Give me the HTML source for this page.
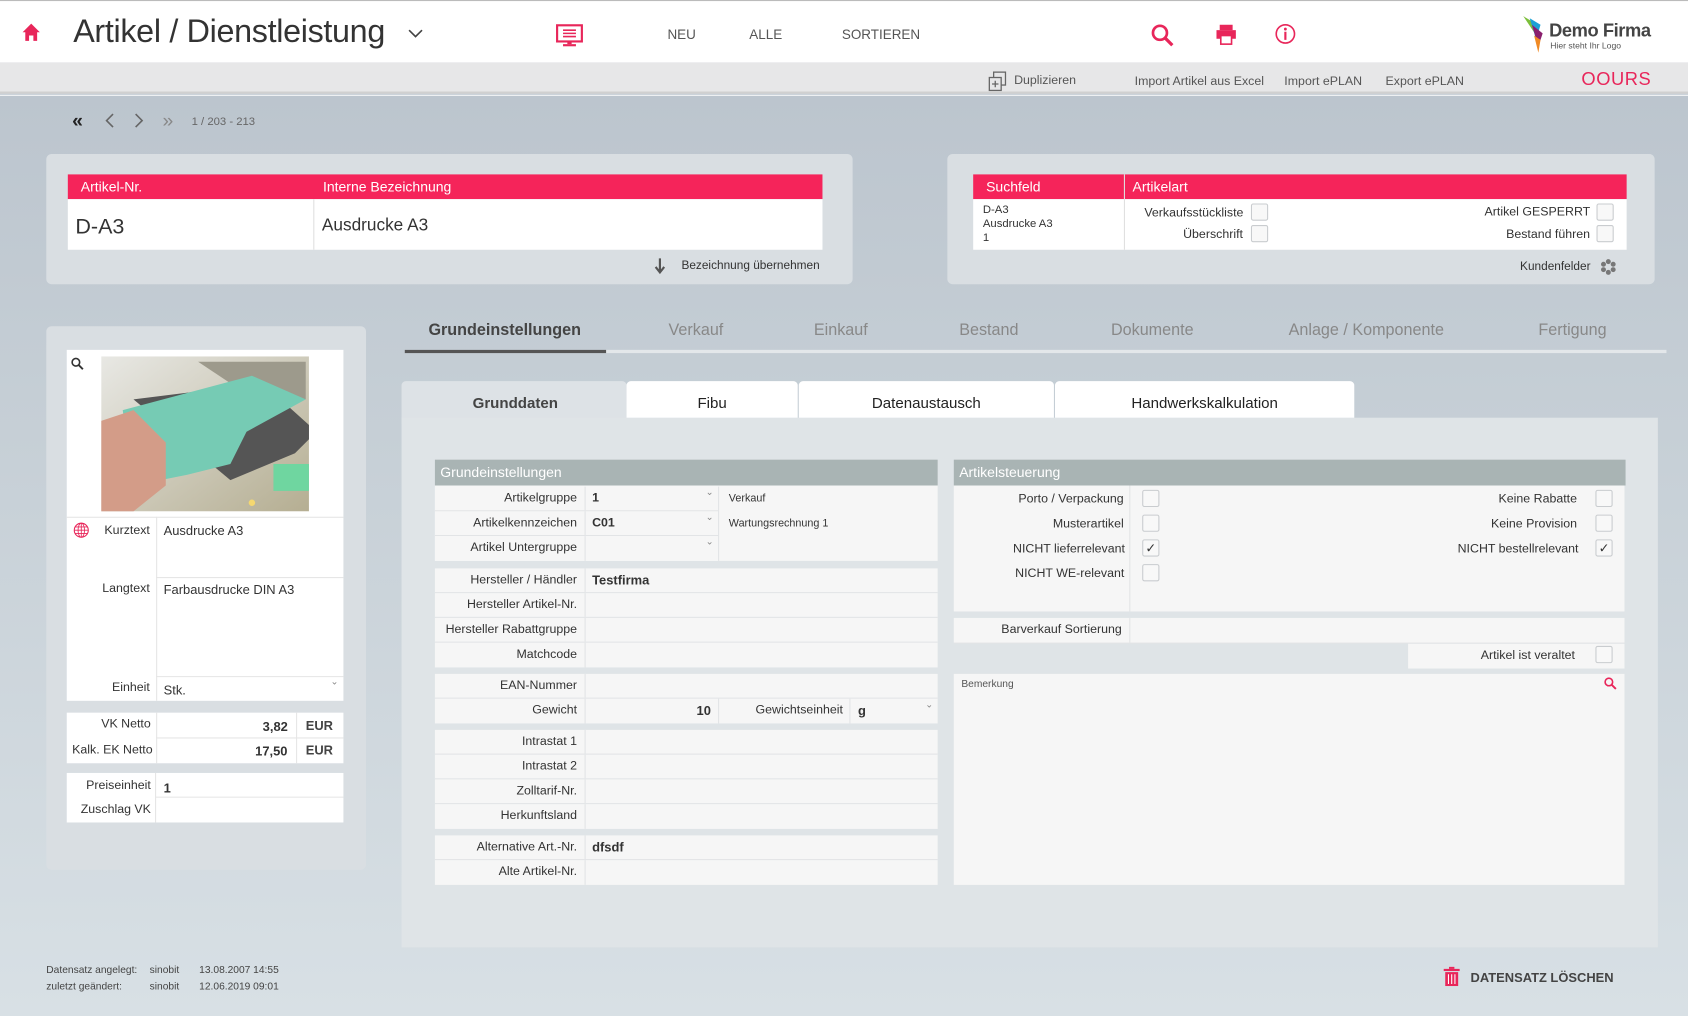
<!DOCTYPE html>
<html><head><meta charset="utf-8">
<style>
*{box-sizing:border-box;margin:0;padding:0}
html,body{width:1688px;height:1016px;overflow:hidden;background:#d5dde2}
#w{position:absolute;left:0;top:0;width:1568px;height:944px;transform:scale(1.07653);transform-origin:0 0;font-family:"Liberation Sans",sans-serif;color:#333;background:linear-gradient(#bcc5ce 90px,#c6cfd6 400px,#d8e0e5 944px)}
.a{position:absolute}
.t{position:absolute;white-space:nowrap}
.card{position:absolute;background:#d9dee2;border-radius:5px}
.ph{position:absolute;height:23px;background:#f5245a;color:#fff;font-size:13px;line-height:23px}
.wh{position:absolute;background:#fff}
.gh{position:absolute;background:#a9b4b4;color:#fff;font-size:13px;line-height:24px;padding-left:5px}
.row{position:absolute;background:#f6f6f6;border-bottom:1px solid #e2e4e6;height:23px;font-size:11.5px;line-height:23px}
.lab{position:absolute;text-align:right;color:#333}
.vl{position:absolute;border-left:1px solid #e2e4e6;top:0;bottom:0}
.cb{position:absolute;width:16px;height:16px;border:1px solid #c9cccf;border-radius:2px;background:#f8f8f8;font-size:12px;line-height:14px;text-align:center;color:#333}
.dd{position:absolute;font-size:9px;color:#888}
.tab{position:absolute;font-size:15px;color:#888;top:298px}
.st{position:absolute;top:354px;height:34px;background:#fff;border-radius:4px 4px 0 0;font-size:14px;line-height:40px;text-align:center;color:#222}
</style></head><body><div id="w">
<div class="a" style="left:0;top:0;width:1568px;height:58px;background:#fff;border-top:1px solid #bbb"></div>
<svg class="a" style="left:20px;top:21px" width="18" height="18" viewBox="0 0 18 18"><path d="M9 1 L1 9 L3.5 9 L3.5 17 L7 17 L7 12 L11 12 L11 17 L14.5 17 L14.5 9 L17 9 Z" fill="#e8265a"/></svg>
<div class="t" style="left:68px;top:13px;font-size:30px;color:#333;letter-spacing:-0.3px">Artikel / Dienstleistung</div>
<svg class="a" style="left:379px;top:27px" width="14" height="9"><path d="M1 1 L7 7 L13 1" stroke="#444" stroke-width="1.5" fill="none"/></svg>
<svg class="a" style="left:516px;top:22px" width="26" height="22" viewBox="0 0 26 22"><rect x="1.5" y="1.5" width="23" height="15" fill="none" stroke="#e8265a" stroke-width="2"/><path d="M7 6h12M7 9h12M7 12h12" stroke="#e8265a" stroke-width="1.5"/><rect x="11" y="17" width="4" height="2" fill="#e8265a"/><rect x="7" y="19" width="12" height="2" fill="#e8265a"/></svg>
<div class="t" style="left:620px;top:25px;font-size:12.5px;color:#555">NEU</div>
<div class="t" style="left:696px;top:25px;font-size:12.5px;color:#555">ALLE</div>
<div class="t" style="left:782px;top:25px;font-size:12.5px;color:#555">SORTIEREN</div>
<svg class="a" style="left:1069px;top:22px" width="22" height="22" viewBox="0 0 22 22"><circle cx="8.5" cy="8.5" r="6.5" stroke="#e8265a" stroke-width="2.5" fill="none"/><path d="M13 13 L20 20" stroke="#e8265a" stroke-width="3"/></svg>
<svg class="a" style="left:1129px;top:22px" width="20" height="20" viewBox="0 0 20 20"><rect x="4" y="1" width="12" height="5" fill="#e8265a"/><rect x="1" y="6" width="18" height="8" fill="#e8265a"/><rect x="5" y="11" width="10" height="8" fill="#fff" stroke="#e8265a" stroke-width="1.5"/></svg>
<svg class="a" style="left:1184px;top:21px" width="20" height="21" viewBox="0 0 20 21"><circle cx="10" cy="10.5" r="8.5" stroke="#e8265a" stroke-width="1.5" fill="none"/><circle cx="10" cy="6" r="1.3" fill="#e8265a"/><path d="M10 8.5V16" stroke="#e8265a" stroke-width="2"/></svg>
<svg class="a" style="left:1413px;top:13px" width="26" height="38" viewBox="0 0 26 38"><path d="M2 2 L12 8 L14 20 Z" fill="#7cbf3a"/><path d="M8 4 L18 10 L14 24 Z" fill="#1ba1d6"/><path d="M10 10 L20 18 L16 30 Z" fill="#8a1f6e"/><path d="M12 20 L18 24 L16 36 Z" fill="#f08a24"/></svg>
<div class="t" style="left:1439px;top:19px;font-size:17px;font-weight:bold;color:#444;letter-spacing:-0.4px">Demo Firma</div>
<div class="t" style="left:1440px;top:38px;font-size:8px;color:#555">Hier steht Ihr Logo</div>
<div class="a" style="left:0;top:58px;width:1568px;height:29px;background:#e7e7e8;border-bottom:2px solid #d0d0d0"></div>
<div class="a" style="left:0;top:88px;width:1568px;height:1px;background:#fafafa"></div>
<svg class="a" style="left:917px;top:66px" width="20" height="20" viewBox="0 0 20 20"><rect x="6" y="1" width="11" height="12" fill="none" stroke="#666" stroke-width="1.2"/><rect x="2" y="6" width="11" height="12" fill="#e7e7e8" stroke="#666" stroke-width="1.2"/><path d="M7.5 9v6M4.5 12h6" stroke="#666" stroke-width="1.2"/></svg>
<div class="t" style="left:942px;top:69px;font-size:11.5px;color:#555">Duplizieren</div>
<div class="t" style="left:1054px;top:70px;font-size:11.5px;color:#555">Import Artikel aus Excel</div>
<div class="t" style="left:1193px;top:70px;font-size:11.5px;color:#555">Import ePLAN</div>
<div class="t" style="left:1287px;top:70px;font-size:11.5px;color:#555">Export ePLAN</div>
<div class="t" style="left:1469px;top:64px;font-size:17px;color:#e8265a;letter-spacing:0.5px">OOURS</div>
<div class="t" style="left:67px;top:102px;font-size:18px;color:#222;font-weight:bold">«</div>
<svg class="a" style="left:97px;top:105px" width="10" height="14"><path d="M8 1 L2 7 L8 13" stroke="#666" stroke-width="1.5" fill="none"/></svg>
<svg class="a" style="left:124px;top:105px" width="10" height="14"><path d="M2 1 L8 7 L2 13" stroke="#666" stroke-width="1.5" fill="none"/></svg>
<div class="t" style="left:151px;top:102px;font-size:18px;color:#888">»</div>
<div class="t" style="left:178px;top:107px;font-size:10.5px;color:#666">1 / 203 - 213</div>
<div class="card" style="left:43px;top:143px;width:749px;height:121px"></div>
<div class="ph" style="left:63px;top:162px;width:701px"><span class="t" style="left:12px">Artikel-Nr.</span><span class="t" style="left:237px">Interne Bezeichnung</span></div>
<div class="wh" style="left:63px;top:185px;width:701px;height:47px"></div>
<div class="a" style="left:291px;top:185px;width:1px;height:47px;background:#e0e0e0"></div>
<div class="t" style="left:70px;top:200px;font-size:20px;color:#333">D-A3</div>
<div class="t" style="left:299px;top:201px;font-size:16px;color:#333">Ausdrucke A3</div>
<svg class="a" style="left:608px;top:239px" width="10" height="16"><path d="M5 1V13M1 9L5 14L9 9" stroke="#555" stroke-width="2" fill="none"/></svg>
<div class="t" style="left:633px;top:241px;font-size:11px;color:#333">Bezeichnung übernehmen</div>
<div class="card" style="left:880px;top:143px;width:657px;height:121px"></div>
<div class="ph" style="left:904px;top:162px;width:607px"><span class="t" style="left:12px">Suchfeld</span><span class="t" style="left:148px">Artikelart</span></div>
<div class="wh" style="left:904px;top:185px;width:607px;height:47px"></div>
<div class="a" style="left:1044px;top:162px;width:1px;height:70px;background:#e0e0e0"></div>
<div class="t" style="left:913px;top:189px;font-size:10.5px;line-height:13px;color:#333">D-A3<br>Ausdrucke A3<br>1</div>
<div class="t" style="left:1063px;top:192px;font-size:11.5px">Verkaufsstückliste</div>
<div class="t" style="left:1099px;top:212px;font-size:11.5px">Überschrift</div>
<div class="cb" style="left:1162px;top:189px"></div><div class="cb" style="left:1162px;top:209px"></div>
<div class="t" style="left:1379px;top:191px;font-size:11.5px">Artikel GESPERRT</div>
<div class="t" style="left:1399px;top:212px;font-size:11.5px">Bestand führen</div>
<div class="cb" style="left:1483px;top:189px"></div><div class="cb" style="left:1483px;top:209px"></div>
<div class="t" style="left:1412px;top:242px;font-size:11px">Kundenfelder</div>
<svg class="a" style="left:1486px;top:240px" width="16" height="16" viewBox="0 0 16 16" fill="#777"><circle cx="8" cy="3" r="2.3"/><circle cx="8" cy="13" r="2.3"/><circle cx="3.5" cy="5.5" r="2.3"/><circle cx="12.5" cy="5.5" r="2.3"/><circle cx="3.5" cy="10.5" r="2.3"/><circle cx="12.5" cy="10.5" r="2.3"/></svg>
<div class="card" style="left:43px;top:303px;width:297px;height:505px"></div>
<div class="wh" style="left:62px;top:325px;width:257px;height:326px"></div>
<svg class="a" style="left:66px;top:332px" width="12" height="12"><circle cx="4.5" cy="4.5" r="3.5" stroke="#333" stroke-width="1.5" fill="none"/><path d="M7 7L11 11" stroke="#333" stroke-width="1.8"/></svg>
<svg class="a" style="left:94px;top:331px" width="193" height="144" viewBox="0 0 193 144"><defs><linearGradient id="g" x1="0" y1="0" x2="1" y2="1"><stop offset="0" stop-color="#e8e8e4"/><stop offset="1" stop-color="#b5ae92"/></linearGradient></defs><rect width="193" height="144" fill="url(#g)"/><path d="M90 5 L190 5 L190 40 L150 45 Z" fill="#9d9a8c"/><path d="M30 40 L150 25 L200 70 L180 90 L120 115 Z" fill="#555"/><path d="M20 50 L140 18 L190 40 L135 70 L120 100 L80 110 L30 120 Z" fill="#76cbb4"/><path d="M0 60 L30 50 L60 80 L60 120 L30 144 L0 144 Z" fill="#d39c88"/><rect x="160" y="100" width="33" height="25" fill="#6fd6a0"/><circle cx="140" cy="136" r="3" fill="#f5d870"/></svg>
<div class="a" style="left:62px;top:480px;width:257px;height:1px;background:#e6e6e6"></div>
<div class="a" style="left:145px;top:480px;width:1px;height:171px;background:#e6e6e6"></div>
<div class="a" style="left:145px;top:536px;width:174px;height:1px;background:#e6e6e6"></div>
<div class="a" style="left:145px;top:628px;width:174px;height:1px;background:#e6e6e6"></div>
<svg class="a" style="left:68px;top:485px" width="15" height="15" viewBox="0 0 15 15"><circle cx="7.5" cy="7.5" r="6.5" stroke="#e8265a" stroke-width="1" fill="none"/><ellipse cx="7.5" cy="7.5" rx="3" ry="6.5" stroke="#e8265a" stroke-width="0.8" fill="none"/><path d="M1 7.5H14M2 4.5H13M2 10.5H13M7.5 1V14" stroke="#e8265a" stroke-width="0.8"/></svg>
<div class="t" style="left:97px;top:487px;font-size:11.5px">Kurztext</div>
<div class="t" style="left:152px;top:486px;font-size:12px">Ausdrucke A3</div>
<div class="t" style="left:95px;top:541px;font-size:11.5px">Langtext</div>
<div class="t" style="left:152px;top:541px;font-size:12px">Farbausdrucke DIN A3</div>
<div class="t" style="left:104px;top:633px;font-size:11.5px">Einheit</div>
<div class="t" style="left:152px;top:634px;font-size:12px">Stk.</div>
<div class="dd" style="left:307px;top:628px">&#8964;</div>
<div class="wh" style="left:62px;top:662px;width:257px;height:47px"></div>
<div class="a" style="left:145px;top:662px;width:1px;height:47px;background:#e6e6e6"></div>
<div class="a" style="left:145px;top:685px;width:174px;height:1px;background:#e6e6e6"></div>
<div class="a" style="left:275px;top:662px;width:1px;height:47px;background:#e6e6e6"></div>
<div class="t" style="left:94px;top:667px;font-size:11.5px">VK Netto</div>
<div class="t" style="left:67px;top:691px;font-size:11.5px">Kalk. EK Netto</div>
<div class="t" style="left:244px;top:668px;font-size:12px;font-weight:bold">3,82</div>
<div class="t" style="left:237px;top:691px;font-size:12px;font-weight:bold">17,50</div>
<div class="t" style="left:284px;top:667px;font-size:12px;font-weight:bold;color:#444">EUR</div>
<div class="t" style="left:284px;top:690px;font-size:12px;font-weight:bold;color:#444">EUR</div>
<div class="wh" style="left:62px;top:718px;width:257px;height:46px"></div>
<div class="a" style="left:144px;top:718px;width:1px;height:46px;background:#e6e6e6"></div>
<div class="a" style="left:144px;top:740px;width:175px;height:1px;background:#e6e6e6"></div>
<div class="t" style="left:80px;top:724px;font-size:11.5px">Preiseinheit</div>
<div class="t" style="left:75px;top:746px;font-size:11.5px">Zuschlag VK</div>
<div class="t" style="left:152px;top:725px;font-size:12px;font-weight:bold">1</div>
<div class="t tab" style="left:398px;color:#444;font-weight:bold">Grundeinstellungen</div>
<div class="t tab" style="left:621px">Verkauf</div>
<div class="t tab" style="left:756px">Einkauf</div>
<div class="t tab" style="left:891px">Bestand</div>
<div class="t tab" style="left:1032px">Dokumente</div>
<div class="t tab" style="left:1197px">Anlage / Komponente</div>
<div class="t tab" style="left:1429px">Fertigung</div>
<div class="a" style="left:376px;top:325px;width:1172px;height:3px;background:#e3e7ea"></div>
<div class="a" style="left:376px;top:325px;width:187px;height:3px;background:#555"></div>
<div class="a" style="left:373px;top:354px;width:209px;height:40px;background:#dde2e6;border-radius:4px 4px 0 0"></div>
<div class="a" style="left:373px;top:388px;width:1167px;height:492px;background:#dfe4e7"></div>
<div class="t" style="left:439px;top:366px;font-size:14px;font-weight:bold;color:#444">Grunddaten</div>
<div class="st" style="left:582px;width:159px">Fibu</div>
<div class="st" style="left:742px;width:237px">Datenaustausch</div>
<div class="st" style="left:980px;width:278px">Handwerkskalkulation</div>
<div class="gh" style="left:404px;top:427px;width:467px">Grundeinstellungen</div>
<div class="a" style="left:404px;top:451px;width:467px;height:70px;background:#f6f6f6"></div>
<div class="row" style="left:404px;top:452px;width:263px"><span class="lab" style="right:131px">Artikelgruppe</span><span class="t" style="left:146px;font-weight:bold">1</span><span class="vl" style="left:139px"></span><span class="dd" style="right:4px;top:-6px">&#8964;</span></div>
<div class="row" style="left:404px;top:475px;width:263px"><span class="lab" style="right:131px">Artikelkennzeichen</span><span class="t" style="left:146px;font-weight:bold">C01</span><span class="vl" style="left:139px"></span><span class="dd" style="right:4px;top:-6px">&#8964;</span></div>
<div class="row" style="left:404px;top:498px;width:263px;border-bottom:none"><span class="lab" style="right:131px">Artikel Untergruppe</span><span class="vl" style="left:139px"></span><span class="dd" style="right:4px;top:-6px">&#8964;</span></div>
<div class="a" style="left:667px;top:452px;width:1px;height:69px;background:#e2e4e6"></div>
<div class="t" style="left:677px;top:458px;font-size:10px">Verkauf</div>
<div class="t" style="left:677px;top:481px;font-size:10px">Wartungsrechnung 1</div>
<div class="row" style="left:404px;top:528px;width:467px"><span class="lab" style="right:335px">Hersteller / Händler</span><span class="t" style="left:146px;font-weight:bold;font-size:12px">Testfirma</span><span class="vl" style="left:139px"></span></div>
<div class="row" style="left:404px;top:551px;width:467px"><span class="lab" style="right:335px">Hersteller Artikel-Nr.</span><span class="vl" style="left:139px"></span></div>
<div class="row" style="left:404px;top:574px;width:467px"><span class="lab" style="right:335px">Hersteller Rabattgruppe</span><span class="vl" style="left:139px"></span></div>
<div class="row" style="left:404px;top:597px;width:467px;border-bottom:none"><span class="lab" style="right:335px">Matchcode</span><span class="vl" style="left:139px"></span></div>
<div class="row" style="left:404px;top:626px;width:467px"><span class="lab" style="right:335px">EAN-Nummer</span><span class="vl" style="left:139px"></span></div>
<div class="row" style="left:404px;top:649px;width:467px;border-bottom:none"><span class="lab" style="right:335px">Gewicht</span><span class="vl" style="left:139px"></span><span class="t" style="left:243px;font-weight:bold;font-size:12px">10</span><span class="vl" style="left:263px"></span><span class="lab" style="right:88px">Gewichtseinheit</span><span class="vl" style="left:385px"></span><span class="t" style="left:393px;font-weight:bold;font-size:12px">g</span><span class="dd" style="right:4px;top:-6px">&#8964;</span></div>
<div class="row" style="left:404px;top:678px;width:467px"><span class="lab" style="right:335px">Intrastat 1</span><span class="vl" style="left:139px"></span></div>
<div class="row" style="left:404px;top:701px;width:467px"><span class="lab" style="right:335px">Intrastat 2</span><span class="vl" style="left:139px"></span></div>
<div class="row" style="left:404px;top:724px;width:467px"><span class="lab" style="right:335px">Zolltarif-Nr.</span><span class="vl" style="left:139px"></span></div>
<div class="row" style="left:404px;top:747px;width:467px;border-bottom:none"><span class="lab" style="right:335px">Herkunftsland</span><span class="vl" style="left:139px"></span></div>
<div class="row" style="left:404px;top:776px;width:467px"><span class="lab" style="right:335px">Alternative Art.-Nr.</span><span class="t" style="left:146px;font-weight:bold;font-size:12px">dfsdf</span><span class="vl" style="left:139px"></span></div>
<div class="row" style="left:404px;top:799px;width:467px;border-bottom:none"><span class="lab" style="right:335px">Alte Artikel-Nr.</span><span class="vl" style="left:139px"></span></div>
<div class="gh" style="left:886px;top:427px;width:624px">Artikelsteuerung</div>
<div class="a" style="left:886px;top:451px;width:623px;height:117px;background:#f6f6f6"></div>
<div class="a" style="left:1049px;top:451px;width:1px;height:117px;background:#e2e4e6"></div>
<div class="t" style="left:946px;top:458px;font-size:11.5px">Porto / Verpackung</div>
<div class="t" style="left:978px;top:481px;font-size:11.5px">Musterartikel</div>
<div class="t" style="left:941px;top:504px;font-size:11.5px">NICHT lieferrelevant</div>
<div class="t" style="left:943px;top:527px;font-size:11.5px">NICHT WE-relevant</div>
<div class="cb" style="left:1061px;top:455px"></div><div class="cb" style="left:1061px;top:478px"></div><div class="cb" style="left:1061px;top:501px">&#10003;</div><div class="cb" style="left:1061px;top:524px"></div>
<div class="t" style="left:1392px;top:458px;font-size:11.5px">Keine Rabatte</div>
<div class="t" style="left:1385px;top:481px;font-size:11.5px">Keine Provision</div>
<div class="t" style="left:1354px;top:504px;font-size:11.5px">NICHT bestellrelevant</div>
<div class="cb" style="left:1482px;top:455px"></div><div class="cb" style="left:1482px;top:478px"></div><div class="cb" style="left:1482px;top:501px">&#10003;</div>
<div class="row" style="left:886px;top:574px;width:623px;border-bottom:none"><span class="lab" style="right:467px">Barverkauf Sortierung</span><span class="vl" style="left:163px"></span></div>
<div class="a" style="left:886px;top:597px;width:623px;height:1px;background:#e2e4e6"></div>
<div class="row" style="left:1308px;top:598px;width:201px;border-bottom:none"><span class="lab" style="right:46px">Artikel ist veraltet</span></div>
<div class="cb" style="left:1482px;top:600px"></div>
<div class="a" style="left:886px;top:626px;width:623px;height:196px;background:#f6f6f6"></div>
<div class="t" style="left:893px;top:630px;font-size:9.5px;color:#555">Bemerkung</div>
<svg class="a" style="left:1490px;top:629px" width="12" height="12"><circle cx="4.5" cy="4.5" r="3.5" stroke="#e8265a" stroke-width="1.5" fill="none"/><path d="M7 7L11 11" stroke="#e8265a" stroke-width="1.8"/></svg>
<div class="t" style="left:43px;top:894px;font-size:9.5px;line-height:15px;color:#444">Datensatz angelegt:<br>zuletzt geändert:</div>
<div class="t" style="left:139px;top:894px;font-size:9.5px;line-height:15px;color:#444">sinobit<br>sinobit</div>
<div class="t" style="left:185px;top:894px;font-size:9.5px;line-height:15px;color:#444">13.08.2007 14:55<br>12.06.2019 09:01</div>
<svg class="a" style="left:1341px;top:898px" width="15" height="18" viewBox="0 0 15 18"><rect x="5" y="0" width="5" height="2" fill="#e8265a"/><rect x="0" y="2" width="15" height="2" fill="#e8265a"/><rect x="1.5" y="5" width="12" height="13" fill="#e8265a"/><path d="M4.5 7V16M7.5 7V16M10.5 7V16" stroke="#fff" stroke-width="1"/></svg>
<div class="t" style="left:1366px;top:901px;font-size:12px;font-weight:bold;color:#444">DATENSATZ LÖSCHEN</div>
</div></body></html>
